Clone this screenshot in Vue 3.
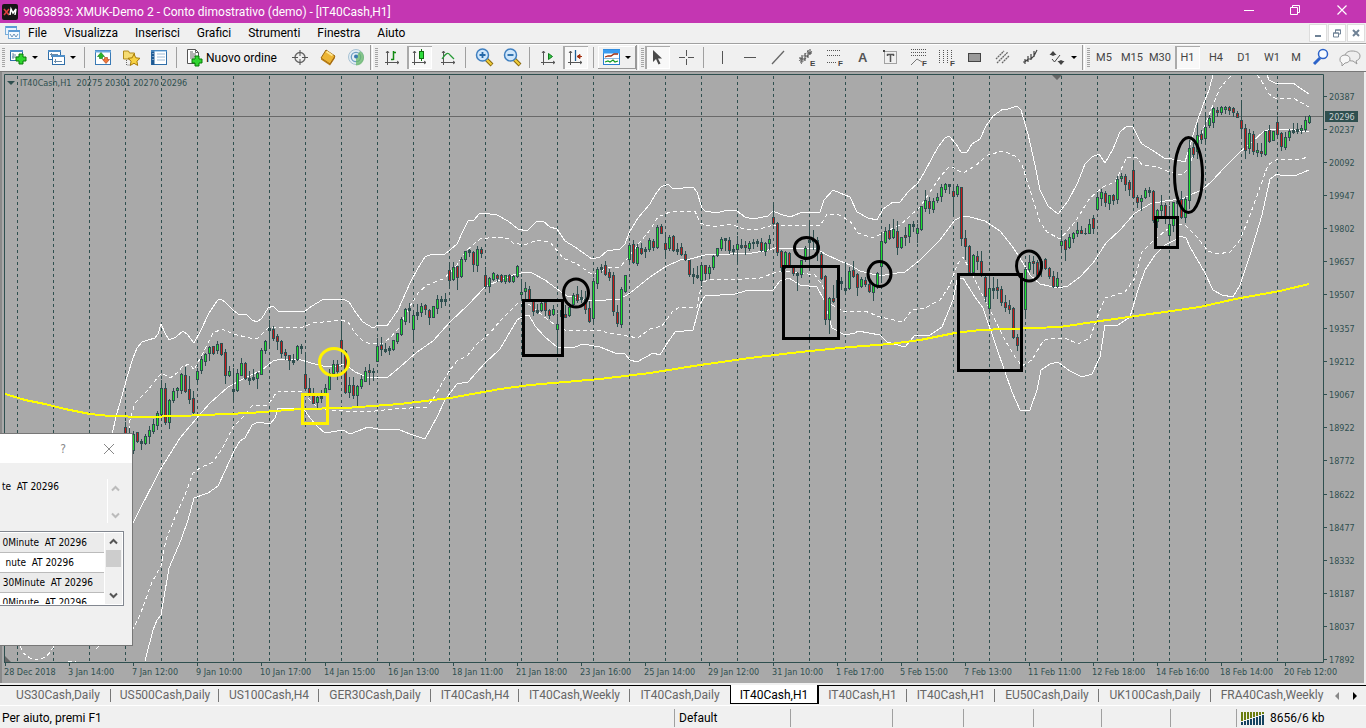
<script setup>
const menus = ['File', 'Visualizza', 'Inserisci', 'Grafici', 'Strumenti', 'Finestra', 'Aiuto']

const axes = '<path d="M4.5 3v14M2 14.5h14M3 5l1.5-2 1.5 2M14 13l2 1.5-2 1.5" fill="none" stroke="#555"/>'
const plus = (x, y) => `<path d="M${x + 3} ${y}h4v3h3v4h-3v3h-4v-3h-3v-4h3z" fill="#2fd52f" stroke="#087a08"/>`
const lens = (inner) =>
  `<path d="M11 11l6 6" stroke="#8a6a10" stroke-width="4"/><path d="M11 11l5.500 5.500" stroke="#f2cf3a" stroke-width="2"/><circle cx="7.500" cy="7" r="6" fill="#cfe6fb" stroke="#3f7fbf" stroke-width="1.500"/>${inner}`
const letter = (c) => `<text x="13" y="18" font-size="8" font-weight="700" font-family="Liberation Sans, sans-serif" fill="#444">${c}</text>`

const icons = {
  newChart: '<rect x="1.500" y="2.500" width="12" height="10" fill="#fff" stroke="#2f6ea8"/><path d="M1 3h13" stroke="#4f8fc8" stroke-width="2"/><path d="M4 5v6M3 9h8M4 7h3" stroke="#6b8ba8" fill="none"/>' + plus(7, 6),
  profiles: '<rect x="1.500" y="2.500" width="12" height="9" fill="#fff" stroke="#2f6ea8"/><path d="M1 3h13" stroke="#4f8fc8" stroke-width="2"/><rect x="5.500" y="7.500" width="12" height="9" fill="#fff" stroke="#2f6ea8"/><path d="M5 8h13" stroke="#4f8fc8" stroke-width="2"/><path d="M4.500 5v4M8.500 11v4M7 13.500h8M3 6.500h8" stroke="#6b8ba8"/>',
  market: '<rect x="1.500" y="2.500" width="15" height="14" fill="#fff" stroke="#3a7ab5"/><path d="M1 3.500h16" stroke="#6cabe0" stroke-width="2"/><path d="M7 4.500l3.500 4h-2v2h-3v-2h-2z" fill="#27b527" stroke="#0b7a0b" stroke-width=".6"/><path d="M12 15.500l-3.500-4h2v-2h3v2h2z" fill="#f0783a" stroke="#a83a10" stroke-width=".6"/>',
  navigator: '<path d="M1.500 3h5l1 2h5v6h-11z" fill="#f6dc72" stroke="#b08a1c"/><path d="M4.500 12v5h4" stroke="#666" stroke-dasharray="1 1" fill="none"/><path d="M12 6l1.800 3.800 4.200.5-3.100 2.900.8 4.200L12 15.300l-3.700 2.100.8-4.200L6 10.300l4.200-.5z" fill="#f8d242" stroke="#a67a08"/>',
  terminal: '<rect x="1.500" y="2.500" width="15" height="14" fill="#fff" stroke="#2f6ea8"/><path d="M3 2v15" stroke="#1f5a94" stroke-width="3"/><path d="M1 3h16" stroke="#6cabe0" stroke-width="1"/><path d="M7 6h8M7 9h8M7 12h8" stroke="#9ebcd6"/><path d="M3 5v9" stroke="#d5e7f7" stroke-dasharray="1 2"/>',
  order: '<path d="M1.500 1.500h8l3 3v11h-11z" fill="#fff" stroke="#555"/><path d="M9.500 1.500v3h3M4 6h6M4 8h6M4 10h4M4 4h3" stroke="#666" fill="none"/>' + plus(6, 8),
  target: '<circle cx="9" cy="9.500" r="5" fill="none" stroke="#666" stroke-width="1.300"/><path d="M9 2v6M9 11v6M1 9.500h6M11 9.500h6" stroke="#555"/>',
  gold: '<path d="M7 2l9 6-5 8-9-6z" fill="#edb534" stroke="#986610"/><path d="M2 10l9 6v1.500l-9-6z" fill="#b8790d"/><path d="M16 8v2l-5 7.500V16z" fill="#a9690a"/><path d="M7.500 3.500l6 4" stroke="#ffe691" stroke-width="2"/>',
  signal: '<circle cx="9" cy="9" r="7.500" fill="#e4eef4" stroke="#a7c2d4"/><circle cx="9" cy="9" r="4.700" fill="none" stroke="#6f9fc4" stroke-width="1.300"/><path d="M9 9v8.500c4.500 0 8-3.500 8-8 0-3-1.500-5-4-6.500" fill="#65b765" opacity=".75"/><circle cx="9" cy="8.500" r="2" fill="#3a7ab0"/>',
  bars: axes + '<path d="M10.500 3v9M8 11.500h2.500M10.500 4.500H13" stroke="#118a11" stroke-width="1.500" fill="none"/>',
  candles: axes + '<path d="M11.500 1v12" stroke="#107010"/><rect x="9.500" y="3.500" width="4" height="7" fill="#2ddc3c" stroke="#107010"/>',
  line: axes + '<path d="M3 11c4-6 6-7 8-4l4 4" stroke="#269a36" fill="none" stroke-width="1.200"/>',
  zoomIn: lens('<path d="M4.500 7h6M7.500 4v6" stroke="#2468a8" stroke-width="1.800"/>'),
  zoomOut: lens('<path d="M4.500 7h6" stroke="#2468a8" stroke-width="1.800"/>'),
  scroll: axes + '<path d="M9.500 5.500v6l4-3z" fill="#35c445" stroke="#0e7a1b"/>',
  shift: axes + '<path d="M9.500 2v11" stroke="#1e5f96" stroke-width="1.300"/><path d="M16 8.500H11M14 6.500l-3 2 3 2z" stroke="#a33010" fill="#a33010"/>',
  template: '<rect x="1.500" y="1.500" width="16" height="15" fill="#fff" stroke="#2b7fd0"/><path d="M1 3.500h17" stroke="#3b9cf0" stroke-width="4"/><path d="M3 9l3-1h3l3-2h4" stroke="#a33010" fill="none" stroke-width="1.300"/><path d="M2 10.500h15" stroke="#8fb9de"/><path d="M3 14l3-1 2 1 3-2 2 2 3-1" stroke="#159a25" fill="none" stroke-width="1.300"/>',
  cursor: '<path d="M5 2v12l3-3 2.500 5.500 2-1L10 10.500h4z" fill="#4a4a4a"/>',
  cross: '<path d="M9.500 2v6M9.500 11v6M2 9.500h6M11 9.500h6" stroke="#555"/>',
  vline: '<path d="M9.500 3v13" stroke="#555"/>',
  hline: '<path d="M3 9.500h12" stroke="#555"/>',
  trend: '<path d="M3 16L15 3" stroke="#666" stroke-width="1.300"/>',
  channel: '<path d="M2 13L12 2M4 16L15 3" stroke="#777" stroke-dasharray="2 1"/><path d="M2 10h2v5M5 7v7M8 5v8M11 2v8M13 1v6M5 11h3M8 8h3M11 5h4" stroke="#444" fill="none"/>' + letter('E'),
  fibo: '<path d="M2 2.500h14M2 7.500h14M2 14.500h9" stroke="#555" stroke-dasharray="1 1"/>' + letter('F'),
  text: '<text x="5" y="14" font-size="13" font-weight="700" font-family="Liberation Sans, sans-serif" fill="#555">A</text>',
  label: '<rect x="3.500" y="3.500" width="12" height="12" fill="none" stroke="#555" stroke-dasharray="1 1"/><path d="M6 6.500h7M9.500 6.500V14M6.500 6v2M12.500 6v2" stroke="#555" stroke-width="1.500"/><path d="M2 2h2v2H2z" fill="#444"/>',
  fiboFan: '<path d="M2 1.500h15M2 4.500h15M2 7.500h15" stroke="#555" stroke-dasharray="1 1"/><path d="M2 17l6-6 5 3" stroke="#777" fill="none"/>' + letter('F'),
  fiboTime: '<path d="M2.500 2v13M6.500 2v13M10.500 2v13M14.500 2v9" stroke="#555" stroke-dasharray="1 1"/>' + letter('F'),
  rect: '<rect x="3.500" y="5.500" width="12" height="8" fill="#999" stroke="#444"/>',
  parallel: '<path d="M3 11L11 3M4 15L15 4M9 15l7-7" stroke="#666" stroke-dasharray="2 .6" stroke-width="1.300"/>',
  andrews: '<path d="M4 11v5M7 8v6M10 6v6M13 3v6M2 14h2l3-3h3l3-3 3-6" stroke="#444" fill="none" stroke-width="1.200"/>',
  arrows: '<path d="M5 3l3.500 4H7L5 8 3 7H1.500z M13 17l-3.500-4H11l2-1 2 1h1.500z" fill="#444"/><path d="M4 11l2.500 3L12 7" stroke="#444" fill="none"/>',
  search: '<path d="M9 10l-6 6" stroke="#2c63c9" stroke-width="3"/><circle cx="12" cy="6" r="4.500" fill="#f7fbff" stroke="#2c63c9" stroke-width="1.500"/>',
}

const toolbar = [
  { t: 'grip' }, { t: 'drop', icon: 'newChart', label: 'Nuovo grafico' }, { t: 'drop', icon: 'profiles', label: 'Profili' }, { t: 'sep' },
  { t: 'btn', icon: 'market', label: 'Market Watch' }, { t: 'btn', icon: 'navigator', label: 'Navigatore' }, { t: 'btn', icon: 'terminal', label: 'Terminale' }, { t: 'sep' },
  { t: 'order', icon: 'order', label: 'Nuovo ordine' },
  { t: 'btn', icon: 'target', label: 'Mirino' }, { t: 'btn', icon: 'gold', label: 'Mercato' }, { t: 'btn', icon: 'signal', label: 'Segnali' }, { t: 'end' },
  { t: 'grip' }, { t: 'btn', icon: 'bars', label: 'Barre' }, { t: 'btn', icon: 'candles', label: 'Candele', on: true }, { t: 'btn', icon: 'line', label: 'Linea' }, { t: 'sep' },
  { t: 'btn', icon: 'zoomIn', label: 'Ingrandisci' }, { t: 'btn', icon: 'zoomOut', label: 'Riduci' }, { t: 'sep' },
  { t: 'btn', icon: 'scroll', label: 'Scorrimento' }, { t: 'btn', icon: 'shift', label: 'Spostamento', on: true }, { t: 'sep' },
  { t: 'drop', icon: 'template', label: 'Modelli', raised: true }, { t: 'end' },
  { t: 'grip' }, { t: 'btn', icon: 'cursor', label: 'Cursore', on: true }, { t: 'btn', icon: 'cross', label: 'Croce' }, { t: 'sep' },
  ...['vline', 'hline', 'trend', 'channel', 'fibo', 'text', 'label', 'fiboFan', 'fiboTime', 'rect', 'parallel', 'andrews'].map((icon) => ({ t: 'btn', icon, label: icon })),
  { t: 'drop', icon: 'arrows', label: 'Frecce' }, { t: 'end' },
  { t: 'grip' }, ...['M5', 'M15', 'M30', 'H1', 'H4', 'D1', 'W1'].map((text) => ({ t: 'btn', text, on: text === 'H1' })), { t: 'btn', text: 'M', narrow: true },
  { t: 'btn', icon: 'search', label: 'Cerca' },
]

const gridXs = Array.from({ length: 36 }, (_, i) => 17 + 36 * i)

const prices = [
  [20387, 97], [20237, 130], [20092, 163], [19947, 196], [19802, 229], [19657, 262], [19507, 295], [19357, 329], [19212, 362],
  [19067, 395], [18922, 428], [18772, 461], [18622, 495], [18477, 528], [18332, 561], [18187, 594], [18037, 627], [17892, 660],
]

const times = [
  '28 Dec 2018', '3 Jan 14:00', '7 Jan 12:00', '9 Jan 10:00', '10 Jan 17:00', '14 Jan 15:00', '16 Jan 13:00', '18 Jan 11:00',
  '21 Jan 18:00', '23 Jan 16:00', '25 Jan 14:00', '29 Jan 12:00', '31 Jan 10:00', '1 Feb 17:00', '5 Feb 15:00', '7 Feb 13:00',
  '11 Feb 11:00', '12 Feb 18:00', '14 Feb 16:00', '18 Feb 14:00', '20 Feb 12:00',
]

// Hourly bars, one every 4px from x = 125: direction, high, body top, body bottom, low.
const bars = `d422,427,440,441 d428,436,445,450 u431,434,450,453 d432,432,441,442 x439,441,443,449 u434,436,443,444 u426,430,436,443 u419,424,431,433 u411,413,425,429
u380,388,414,418 d383,388,422,424 u399,400,422,428 u388,391,400,402 u387,388,390,397 u373,374,390,393 d367,375,391,392 d376,389,399,403 d391,398,412,415
u368,371,379,382 u356,359,370,373 u353,354,361,365 u346,347,353,360 d346,346,353,354 u341,344,350,353 d343,343,354,355 d349,352,375,383 u366,371,375,376
x368,389,391,402 u369,373,390,391 u358,363,375,375 d362,363,378,379 x371,378,380,384 x369,377,379,380 u372,373,378,388 u348,350,374,374 u340,341,350,353
x320,328,330,347 d326,329,338,340 d334,336,341,349 d340,341,353,357 d349,352,355,359 d355,355,360,369 x354,360,362,364 u345,346,359,360 x344,346,348,353
d355,374,388,389 d378,388,393,396 d388,393,403,403 u395,397,402,409 x390,396,398,402 u384,388,393,394 u369,373,389,389 u360,364,373,375 d360,364,371,379
d321,340,349,363 d350,351,392,393 u377,385,392,397 d377,385,395,398 u385,386,395,405 u375,379,386,388 u367,371,381,381 d364,370,372,384 x368,371,372,380
u338,346,361,361 d337,345,349,355 x343,349,351,352 x346,348,350,354 u340,340,349,350 u333,333,341,343 u317,319,334,335 u308,309,321,324 x303,308,310,322
u313,315,329,341 x304,312,315,319 u303,306,312,316 d304,305,309,314 d309,310,317,324 u306,306,317,317 u295,299,308,313 x296,299,301,307 x293,299,301,305
d264,270,280,287 u262,267,279,280 d266,266,277,289 u257,259,276,277 u251,251,259,261 x249,250,252,256 d251,252,264,271 u246,249,265,271 d247,249,253,257
d267,275,286,287 u277,278,286,292 u272,273,279,280 d274,275,278,281 d274,275,281,282 u275,275,281,283 d274,275,281,282 u275,276,281,282 u265,266,276,277
u279,292,294,298 u282,288,291,299 d286,289,299,301 d300,301,311,315 x304,310,312,313 u302,303,310,311 d302,302,310,315 d309,310,315,318 u305,309,314,315
u314,324,329,353 d309,310,316,318 d305,314,317,317 u303,307,315,316 u293,295,304,306 d286,294,300,302 x290,297,299,302 d291,299,309,313 d301,308,321,322
u278,281,318,323 u267,269,283,288 x264,267,269,272 d261,265,274,275 d269,272,277,280 d272,275,311,315 d305,312,323,326 u287,289,324,327 u275,275,291,292
u243,245,259,261 d240,244,262,263 u244,247,263,265 d243,248,253,254 x247,249,251,257 u238,240,249,251 d239,241,247,250 u225,227,247,248 d224,226,233,233
d233,243,249,257 u235,237,248,250 d235,236,250,251 x243,249,251,254 d243,247,254,255 d251,254,259,260 d260,260,274,276 x268,274,276,283 x266,275,277,278
u264,265,280,285 d265,265,273,279 u265,267,273,278 u255,256,267,269 u248,248,255,256 u237,239,248,250 x238,238,240,250 d237,240,250,253 x245,249,251,254
u236,244,249,262 x239,245,247,248 d241,245,247,254 u241,243,248,250 x239,242,243,248 x239,241,243,246 d238,242,250,251 u242,243,251,255 u235,239,243,249
d205,217,223,224 d222,223,252,255 d250,251,267,271 u251,252,267,268 d252,253,266,267 d265,266,273,275 x272,273,275,290 u260,260,274,277 u246,248,259,261
x223,240,242,261 x230,239,241,249 d237,240,250,260 d252,254,278,279 d275,276,319,324 u297,298,319,333 d285,298,301,302 u280,280,297,299 x277,281,283,289
x262,288,290,293 u267,271,288,289 d261,270,276,277 d273,274,287,295 u277,279,286,287 d277,280,284,286 d280,284,291,292 u283,285,292,300 u272,273,286,288
u235,241,266,281 u227,231,242,243 d224,230,238,239 u219,229,237,238 d221,231,247,254 u237,237,247,248 d227,235,237,245 u224,224,236,242 x221,224,226,231
u224,228,233,242 u206,206,229,230 u190,200,208,211 d197,201,208,213 u198,201,209,212 u193,197,200,202 u184,187,196,201 u183,184,189,192 x184,184,186,193
d186,191,196,213 u184,186,194,196 d187,187,238,245 d230,238,246,259 d245,246,272,273 u254,255,272,274 d251,256,261,269 d251,261,275,276 d273,277,296,301
u277,288,308,313 x277,288,290,298 d279,287,290,298 d286,289,302,305 d295,302,307,311 d300,305,309,313 d307,308,337,338 d334,337,345,350 x330,340,341,350
u267,269,309,316 u255,262,269,271 d256,261,263,273 d260,262,275,276 d259,261,268,276 d258,259,268,269 d267,268,276,278 d271,276,286,287 u272,278,286,287
u230,241,245,251 d239,240,249,260 u234,237,247,248 u232,233,238,242 u222,230,233,236 d226,230,233,233 u228,233,233,234 u219,224,233,233 d215,218,228,233
u193,197,209,210 u189,192,198,205 d191,193,202,206 u195,195,203,209 d194,195,200,204 u176,179,199,203 u173,176,178,181 d174,176,184,190 d180,182,189,195
d162,170,197,198 d195,197,202,207 u195,198,201,210 u188,190,197,198 x187,190,192,196 d190,191,220,222 u209,210,221,227 u195,205,210,215 d203,205,216,223
u206,224,235,238 u202,202,225,231 x197,201,203,215 d191,199,217,218 u197,199,217,222 u140,148,200,208 d143,147,154,157 u123,135,151,158 d130,134,139,143
u114,127,138,142 u115,118,125,127 u107,108,122,127 d107,110,112,116 u106,107,112,114 u106,107,109,113 d106,107,110,114 d107,108,112,116 d111,113,117,117
d103,120,128,137 d124,128,150,158 u129,133,148,153 d131,134,151,154 u143,150,152,156 d143,151,153,156 u131,131,154,155 d125,130,141,142 u131,131,140,140
d116,122,134,138 d132,133,146,150 u132,137,147,149 u129,131,137,140 x123,130,132,133 x123,129,131,133 u125,128,130,133 u116,120,129,131 u115,116,122,123`
  .trim().split(/\s+/)
  .map((s, i) => {
    const [high, top, bottom, low] = s.slice(1).split(',').map(Number)
    return { x: 125 + i * 4, kind: s[0], high, top, bottom, low }
  })

const solidBands = [
  '112,434 117,413 122,396 127,377 133,358 137,348 142,342 148,340 155,338 158,334 161,324 165,333 169,340 176,337 183,331 188,335 194,343 200,332 209,313 215,304 218,300 221,299 226,303 233,310 238,314 246,314 252,320 257,322 262,318 268,308 273,306 278,311 305,311 312,306 322,300 343,299 349,302 356,313 363,322 373,328 378,325 387,326 398,310 410,283 418,268 425,257 432,254 445,254 450,250 457,244 463,231 468,221 474,220 479,214 482,213 497,215 508,221 518,229 527,231 536,222 543,221 550,227 557,229 565,241 575,247 592,259 600,257 607,251 620,249 625,244 629,233 638,218 650,204 655,195 661,187 668,184 673,189 693,187 697,192 702,208 705,211 717,213 727,210 737,211 745,217 753,219 768,216 773,211 780,214 790,217 800,213 820,212 824,200 833,190 840,193 850,197 857,212 868,218 877,220 883,209 893,202 900,202 908,192 918,183 925,171 932,158 938,147 945,138 949,136 956,144 961,152 967,152 972,144 980,139 986,126 993,116 1003,109 1008,109 1017,106 1021,110 1028,134 1035,165 1040,190 1048,206 1058,214 1068,201 1078,182 1085,164 1092,157 1099,154 1105,163 1113,149 1120,132 1127,126 1133,127 1140,141 1142,144 1152,150 1164,158 1172,159 1185,162 1190,145 1196,125 1203,105 1209,90 1213,75',
  '1267,75 1269,80 1275,83 1293,83 1300,88 1309,94',
  '133,523 160,470 180,438 196,419 210,403 228,387 245,378 262,370 273,361 281,359 298,359 311,363 323,366 337,366 345,364 355,372 367,377 388,377 400,367 417,352 433,341 450,322 468,305 485,287 500,280 513,275 525,272 532,273 545,280 557,289 567,296 577,298 592,301 620,299 630,293 650,277 665,267 680,260 690,259 705,255 730,254 752,253 765,251 775,248 817,249 825,254 840,261 850,265 860,271 880,276 890,274 905,272 920,260 940,240 955,220 963,216 970,217 985,221 1000,231 1012,246 1020,258 1030,275 1040,284 1058,288 1068,286 1080,277 1093,263 1106,243 1120,230 1135,213 1150,204 1165,201 1182,199 1192,194 1202,190 1212,181 1225,167 1240,152 1253,141 1263,132 1270,129 1290,129 1300,131 1309,132',
  '145,661 153,630 157,620 161,615 169,568 181,540 188,520 194,498 208,493 218,486 225,471 235,449 240,441 245,438 252,425 258,422 270,424 275,418 278,408 303,408 310,418 318,427 325,433 343,430 350,434 358,431 368,427 378,429 400,430 410,434 425,439 437,417 445,400 457,384 468,382 485,363 500,349 517,320 525,315 529,315 535,326 545,337 557,347 575,347 583,344 600,347 615,353 625,354 630,360 637,362 653,353 660,355 668,342 675,332 693,330 700,304 705,296 735,294 745,291 773,290 780,281 789,278 800,285 817,287 824,300 832,328 845,335 855,333 858,331 880,335 887,342 905,347 915,335 930,335 942,327 953,300 957,280 963,278 975,297 983,308 995,343 1005,372 1012,392 1020,410 1030,410 1037,390 1041,370 1050,364 1058,362 1070,371 1082,377 1092,374 1100,357 1105,325 1118,325 1130,317 1138,290 1145,270 1155,255 1165,245 1175,240 1180,236 1186,238 1190,247 1205,273 1213,290 1222,295 1233,297 1240,285 1250,255 1262,215 1270,179 1277,174 1280,175 1297,175 1309,170',
]

const dashedBands = [
  '129,430 129,423 135,403 148,390 158,377 162,373 170,378 177,373 183,366 190,364 194,370 203,353 213,333 222,329 233,334 250,338 258,338 268,328 277,327 303,327 313,323 333,321 341,320 348,322 355,333 363,341 370,344 383,343 390,338 398,329 409,308 418,293 427,285 443,279 450,273 457,265 467,250 480,239 497,237 510,239 513,243 525,245 537,240 550,242 563,258 577,264 590,273 597,273 608,267 620,267 628,258 640,242 650,230 658,217 670,212 695,211 700,223 713,227 730,224 747,230 760,229 773,225 820,226 827,214 837,214 850,221 858,233 873,238 883,233 900,225 920,207 940,177 950,166 963,173 975,166 988,155 1003,151 1017,157 1022,165 1030,190 1040,222 1047,232 1060,239 1075,222 1090,198 1103,187 1115,182 1127,157 1137,158 1142,165 1157,167 1170,172 1182,175 1188,169 1195,150 1205,125 1213,105 1220,88 1227,80 1232,75',
  '1257,75 1261,80 1269,94 1275,98 1293,98 1309,107',
  '132,631 140,615 152,582 161,566 166,540 175,517 185,495 193,473 200,468 213,462 222,449 233,427 243,417 252,406 268,405 276,393 280,391 303,391 310,400 318,408 330,410 345,411 353,412 375,411 393,409 427,407 435,396 442,383 450,370 457,361 467,356 477,344 490,333 500,321 508,313 518,303 530,305 542,315 555,325 565,330 597,330 605,332 638,338 650,329 662,326 673,311 680,307 697,307 702,282 710,280 745,279 760,278 780,271 795,272 815,275 822,285 832,305 845,312 865,311 880,317 903,322 912,310 925,308 940,300 950,285 957,265 963,257 970,270 985,300 995,320 1005,340 1015,357 1022,366 1032,360 1043,341 1050,338 1065,338 1078,344 1090,338 1100,310 1105,298 1125,292 1135,278 1142,252 1152,242 1165,231 1175,224 1185,225 1197,237 1208,251 1217,254 1230,252 1240,240 1250,215 1258,193 1268,165 1278,159 1300,159 1309,157',
  '20,646 23,653 30,658 38,660 46,657 51,651 54,646',
  '68,661 76,661',
  '96,649 102,643',
]

const average = '5,394 12,396 25,400 45,404 65,409 90,414 110,416 145,417 180,416 250,413 300,409 345,408 400,404 450,398 500,389 530,385 600,379 650,373 700,365 750,358 800,352 850,347 890,344 920,340 955,333 980,330 1060,327 1100,321 1150,314 1200,307 1235,299 1280,291 1309,284'

const alerts = [
  { text: '0Minute\u00a0 AT 20296', end: 17 },
  { text: 'nute\u00a0 AT 20296', end: 30 },
  { text: '30Minute\u00a0 AT 20296', end: 11 },
  { text: '0Minute\u00a0 AT 20296', end: 17 },
]

const tabs = [
  ['US30Cash,Daily', 106], ['US500Cash,Daily', 108], ['US100Cash,H4', 100], ['GER30Cash,Daily', 112], ['IT40Cash,H4', 88],
  ['IT40Cash,Weekly', 111], ['IT40Cash,Daily', 100], ['IT40Cash,H1', 88], ['IT40Cash,H1', 89], ['IT40Cash,H1', 88],
  ['EU50Cash,Daily', 104], ['UK100Cash,Daily', 112], ['FRA40Cash,Weekly', 122],
].map(([name, width], i) => ({ name, width, active: i === 7 }))

const statusCells = [102, 71, 70, 68, 69, 66]
</script>

<template>
  <main class="app">
    <header class="title">
      <svg class="logo" width="16" height="16" viewBox="0 0 16 16"><rect width="16" height="16" rx="2" fill="#161616" /><path d="M2 5l5 6M7 5l-5 6" stroke="#e04040" stroke-width="1.600" /><path d="M8 11l1-6 2 4 3-4-1 6" fill="none" stroke="#fff" stroke-width="1.500" /></svg>
      <h1>9063893: XMUK-Demo 2 - Conto dimostrativo (demo) - [IT40Cash,H1]</h1>
      <button aria-label="Riduci a icona"><svg width="12" height="12"><path d="M1 6.500h10" stroke="#fff" /></svg></button>
      <button aria-label="Ripristina"><svg width="12" height="12"><path d="M1.500 3.500h7v7h-7zM3.500 3.500v-2h7v7h-2" fill="none" stroke="#fff" /></svg></button>
      <button aria-label="Chiudi"><svg width="12" height="12"><path d="M1.500 1.500l9 9M10.500 1.500l-9 9" stroke="#fff" stroke-width="1.200" /></svg></button>
    </header>

    <nav class="menu">
      <svg class="doc" width="16" height="16"><rect x=".5" y="1.500" width="11" height="8" fill="#eaf4fd" stroke="#7aaedb" /><path d="M1 2h11" stroke="#5b9bd5" stroke-width="2" /><rect x="3.500" y="5.500" width="11" height="8" fill="#f4faff" stroke="#7aaedb" /><path d="M4 6h11" stroke="#5b9bd5" stroke-width="2" /><path d="M5 9l2 3 2-3 2 3 2-3" stroke="#6e93b5" fill="none" /></svg>
      <button v-for="m in menus" :key="m">{{ m }}</button>
      <span class="fill"></span>
      <button class="mdi" aria-label="Riduci grafico"><svg width="10" height="10"><path d="M2 8h6" stroke="#6f8296" stroke-width="2" /></svg></button>
      <button class="mdi" aria-label="Ripristina grafico"><svg width="10" height="10"><path d="M1.500 5h5v4h-5zM3.500 5V2h5v4h-2M3 2h6M1 5h6" fill="none" stroke="#6f8296" /></svg></button>
      <button class="mdi" aria-label="Chiudi grafico"><svg width="10" height="10"><path d="M2 2l6 6M8 2L2 8" stroke="#6f8296" stroke-width="2" /></svg></button>
    </nav>

    <div class="toolbar" role="toolbar">
      <template v-for="(b, i) in toolbar" :key="i">
        <span v-if="b.t === 'grip' || b.t === 'sep' || b.t === 'end'" :class="b.t"></span>
        <button v-else :class="['tool', b.t, { on: b.on, raised: b.raised, narrow: b.narrow }]" :aria-label="b.label || b.text">
          <svg v-if="b.icon" width="19" height="19" v-html="icons[b.icon]"></svg>
          <template v-if="b.text">{{ b.text }}</template>
          <span v-if="b.t === 'order'">{{ b.label }}</span>
          <i v-if="b.t === 'drop'" class="caret"></i>
        </button>
      </template>
      <button class="tool chat" aria-label="Chat"><svg width="22" height="18"><path d="M13 2c5 0 8 2 8 5s-2 4-4 5l1 3-4-3c-5 0-8-2-8-5s3-5 7-5z" fill="#eee" stroke="#999" /><path d="M6 6c3 0 5 2 5 4s-2 4-5 4l-3 3v-3c-2-1-2-2-2-4s2-4 5-4z" fill="#f7f7f7" stroke="#999" /></svg></button>
    </div>

    <section class="chart">
      <svg class="plot" viewBox="0 71 1366 612" preserveAspectRatio="xMinYMin meet">
        <defs><clipPath id="area"><rect x="5" y="75" width="1318" height="587" /></clipPath></defs>
        <g clip-path="url(#area)">
          <path v-for="x in gridXs" :key="x" :d="`M${x + 0.5} 76V662`" class="grid" />
          <path d="M5 116.500H1323" stroke="#696969" />
          <polyline v-for="(p, i) in solidBands" :key="'s' + i" :points="p" class="band" />
          <polyline v-for="(p, i) in dashedBands" :key="'d' + i" :points="p" class="band dashed" />
          <g v-for="b in bars" :key="b.x" shape-rendering="crispEdges">
            <rect :x="b.x" :y="b.high" width="1" :height="b.low - b.high + 1" class="ink" />
            <rect :x="b.x - 1" :y="b.top" width="3" :height="b.bottom - b.top + 1" class="ink" />
            <rect v-if="b.kind !== 'x' && b.bottom - b.top > 1" :x="b.x" :y="b.top + 1" width="1" :height="b.bottom - b.top - 1" :class="b.kind" />
          </g>
          <polyline :points="average" class="average" />
          <path d="M1052 75h10l-5 5z M5 656l6 6H5z" fill="#666" />
        </g>
        <path d="M4.500 662V74.500H1323.500V662.500H4" fill="none" class="frame" />
        <g class="marks">
          <rect x="523.5" y="300.5" width="39" height="55" />
          <rect x="783.5" y="266.5" width="55" height="72" />
          <rect x="958.5" y="274.5" width="63" height="96" />
          <rect x="1155.5" y="217.5" width="22" height="30" />
          <ellipse cx="576" cy="293" rx="12.5" ry="14" />
          <ellipse cx="806.5" cy="248" rx="12" ry="10.5" />
          <ellipse cx="879.5" cy="274" rx="11.5" ry="12.5" />
          <ellipse cx="1029" cy="266" rx="12.5" ry="15" />
          <ellipse cx="1188.5" cy="175" rx="14" ry="37.5" />
          <g class="gold"><rect x="302.5" y="394.5" width="25" height="29" /><ellipse cx="334" cy="362" rx="14.5" ry="13.5" /></g>
        </g>
        <path d="M7 81h8l-4 4z" class="ink" />
        <text x="20" y="86">IT40Cash,H1&#160; 20275 20301 20270 20296</text>
        <g v-for="[p, y] in prices" :key="p"><path :d="`M1324 ${y - 0.5}h3`" class="frame" /><text x="1329" :y="y + 3">{{ p }}</text></g>
        <rect x="1325" y="111" width="33" height="11" class="ink" /><text x="1329" y="120" class="now">20296</text>
        <g v-for="(t, i) in times" :key="t"><path :d="`M${5.5 + i * 64} 662v4`" class="frame" /><text :x="4 + i * 64" y="675">{{ t }}</text></g>
      </svg>

      <aside class="dialog">
        <div class="dialog-head"><button aria-label="Guida">?</button><button aria-label="Chiudi avviso"><svg width="12" height="12"><path d="M1 1l10 10M11 1L1 11" stroke="#888" /></svg></button></div>
        <div class="message">
          <span>te&#160; AT 20296</span>
          <div class="spin"><svg width="9" height="7"><path d="M1 5.500l3.500-3.500L8 5.500" /></svg><svg width="9" height="7"><path d="M1 1.500L4.500 5 8 1.500" /></svg></div>
        </div>
        <div class="list">
          <ul><li v-for="(a, i) in alerts" :key="i" :style="{ paddingRight: a.end + 'px' }">{{ a.text }}</li></ul>
          <div class="scroll">
            <button aria-label="Su"><svg width="9" height="7"><path d="M1 5.500l3.500-3.500L8 5.500" /></svg></button>
            <span class="thumb"></span>
            <button aria-label="Giù"><svg width="9" height="7"><path d="M1 1.500L4.500 5 8 1.500" /></svg></button>
          </div>
        </div>
      </aside>
    </section>

    <div class="tabs" role="tablist">
      <button v-for="(t, i) in tabs" :key="i" role="tab" :aria-selected="t.active" :class="{ active: t.active, before: i === 6 || i === 12 }" :style="{ flexBasis: t.width + 'px' }">{{ t.name }}</button>
      <span class="arrows">
        <svg width="6" height="8"><path d="M5 0v8L1 4z" fill="#888" /></svg>
        <svg width="6" height="8"><path d="M1 0v8l4-4z" fill="#000" /></svg>
      </span>
    </div>

    <footer class="status">
      <span class="help">Per aiuto, premi F1</span>
      <span class="cell profile">Default</span>
      <span v-for="(w, i) in statusCells" :key="i" class="cell" :style="{ width: w + 'px' }"></span>
      <span class="cell net">
        <svg width="25" height="13"><g v-for="i in 8" :key="i"><rect :x="(i - 1) * 3" y="0" width="2" :height="10 - i" fill="#6b7d10" /><rect :x="(i - 1) * 3" :y="11 - i" width="2" :height="i + 2" fill="#154360" /></g></svg>
        8656/6 kb
      </span>
    </footer>
  </main>
</template>

<style>
body { background: #f0f0f0; overflow: hidden; }
</style>

<style scoped>
.app { display: flex; flex-direction: column; height: 100vh; background: #f0f0f0; color: #000; font: 12px/16px Roboto, "Open Sans", sans-serif; }
button { margin: 0; padding: 0; border: 0; background: none; color: inherit; font: inherit; }
svg { display: block; flex: none; }
.title { display: flex; align-items: center; height: 23px; flex: none; background: #c436b2; color: #fff; padding-left: 2px; }
.title h1 { flex: 1; margin: 0 0 0 5px; font-size: 12px; font-weight: 400; }
.title button { width: 46px; height: 23px; display: flex; justify-content: center; padding-top: 4px; box-sizing: border-box; }
.title button:last-child { width: 48px; }
.menu { display: flex; align-items: center; gap: 17px; height: 20px; flex: none; padding-left: 5px; }
.menu .doc { margin-right: -10px; }
.menu .fill { flex: 1; }
.menu .mdi { width: 18px; height: 18px; margin-left: -16px; background: #fff; border: 1px solid #ddd; box-sizing: border-box; display: grid; place-items: center; }
.menu .mdi:last-child { margin-right: 1px; }
.toolbar { display: flex; align-items: center; height: 28px; flex: none; box-sizing: border-box; border-top: 1px solid #a0a0a0; box-shadow: inset 0 1px #fff; color: #444; }
.toolbar > * { flex: none; }
.grip { width: 5px; height: 20px; background: repeating-linear-gradient(#a5a5a5 0 1px, transparent 1px 2px) 2px 0 / 3px 20px no-repeat; }
.sep { width: 8px; height: 21px; background: linear-gradient(#a0a0a0, #a0a0a0) 3px 0 / 1px 100% no-repeat; }
.end { width: 3px; height: 25px; box-sizing: border-box; border-left: 1px solid #999; border-right: 1px solid #fff; }
.tool { width: 28px; height: 23px; display: flex; align-items: center; justify-content: center; font: 11px/14px Roboto, sans-serif; }
.tool.drop { width: 38px; gap: 4px; padding-right: 1px; box-sizing: border-box; }
.tool.order { width: 105px; gap: 1px; padding-right: 4px; box-sizing: border-box; color: #000; font: 12px/16px Roboto, sans-serif; }
.tool.narrow { width: 20px; }
.tool.chat { flex: 1; }
.tool.on { background: #f8f8f8; box-shadow: inset 2px 1px #aaa, inset -1px -1px #fff; border-right: 2px solid #f0f0f0; border-left: 1px solid #f0f0f0; box-sizing: border-box; }
.tool.raised { box-shadow: inset -1px -1px #999, inset 1px 1px #fff; }
.caret { border: 3px solid transparent; border-top-color: #000; border-bottom: 0; }
.chart { position: relative; flex: 1; min-height: 0; background: #a9a9a9; overflow: hidden; box-shadow: inset 0 1px #777, inset 2px 0 #8a8a8a, inset -2px 0 #eee; }
.plot { width: 100%; }
.plot text { font: 9px "DejaVu Sans Condensed", "DejaVu Sans", sans-serif; fill: #2f4f4f; white-space: pre; }
.plot .now { fill: #c8d0d0; }
.ink { fill: #2f4f4f; }
.u { fill: #1de22c; }
.d { fill: #c81818; }
.grid { stroke: #2f4f4f; stroke-dasharray: 3 3; }
.frame { stroke: #2f4f4f; }
.band { fill: none; stroke: #fff; shape-rendering: crispEdges; }
.dashed { stroke-dasharray: 4 3; }
.average { fill: none; stroke: #ff0; stroke-width: 2; shape-rendering: crispEdges; }
.marks { fill: none; stroke: #000; stroke-width: 3; }
.marks .gold { stroke: #fff200; }
.dialog { position: absolute; left: 0; top: 362px; width: 133px; height: 213px; box-sizing: border-box; border: 1px solid #777; border-left: 0; background: #f0f0f0; font: 10px/14px "DejaVu Sans Condensed", "DejaVu Sans", sans-serif; display: flex; flex-direction: column; }
.dialog-head { display: flex; justify-content: flex-end; align-items: center; height: 29px; background: #fff; color: #888; flex: none; }
.dialog-head button { width: 46px; display: flex; justify-content: center; font-size: 12px; }
.message { display: flex; justify-content: flex-end; height: 44px; margin: 16px 12px 8px 0; white-space: nowrap; }
.message span { margin: 1px 48px 0 0; }
.spin { width: 13px; border-left: 1px solid #fff; display: flex; flex-direction: column; justify-content: space-between; align-items: flex-end; padding: 6px 0 4px; box-sizing: border-box; }
.dialog path { fill: none; }
.spin path { stroke: #bbb; stroke-width: 2; }
.list { display: flex; height: 75px; box-sizing: border-box; margin-right: 8px; border: 1px solid #828790; border-left: 0; background: #fff; }
.list ul { flex: 1; margin: 1px 0; padding: 0; list-style: none; overflow: hidden; }
.list li { display: flex; justify-content: flex-end; align-items: center; height: 20px; box-sizing: border-box; border-bottom: 1px solid #bbb; white-space: nowrap; }
.list li:nth-child(odd) { background: #ebebeb; }
.scroll { width: 17px; margin: 1px; background: #f0f0f0; display: flex; flex-direction: column; align-items: center; }
.scroll button { height: 17px; width: 17px; display: grid; place-items: center; flex: none; }
.scroll button:last-child { margin-top: auto; }
.scroll path { stroke: #555; stroke-width: 2; }
.thumb { width: 15px; height: 17px; background: #cdcdcd; }
.tabs { display: flex; height: 21px; flex: none; margin-top: 2px; padding-left: 5px; border-top: 1px solid #000; border-bottom: 1px solid #fff; color: #666; box-sizing: border-box; }
.tabs button { flex: 0 0 auto; box-sizing: border-box; height: 18px; background: linear-gradient(#777, #777) right 3px / 1px 13px no-repeat; white-space: nowrap; }
.tabs button.before { background: none; }
.tabs button.active { background: #fff; color: #000; border: 1px solid #000; border-top: 0; margin-top: -1px; padding-top: 1px; height: 19px; box-shadow: 1px 0 #000; }
.tabs .arrows { flex: 1; display: flex; align-items: center; justify-content: flex-end; gap: 12px; padding-right: 8px; }
.status { display: flex; align-items: center; height: 22px; flex: none; padding-top: 2px; box-sizing: border-box; }
.status .help { flex: 1; padding-left: 2px; }
.cell { height: 18px; line-height: 18px; border-left: 1px solid #a0a0a0; box-sizing: border-box; }
.profile { width: 116px; padding-left: 4px; }
.net { width: 130px; display: flex; align-items: center; gap: 4px; padding-left: 4px; }
</style>
